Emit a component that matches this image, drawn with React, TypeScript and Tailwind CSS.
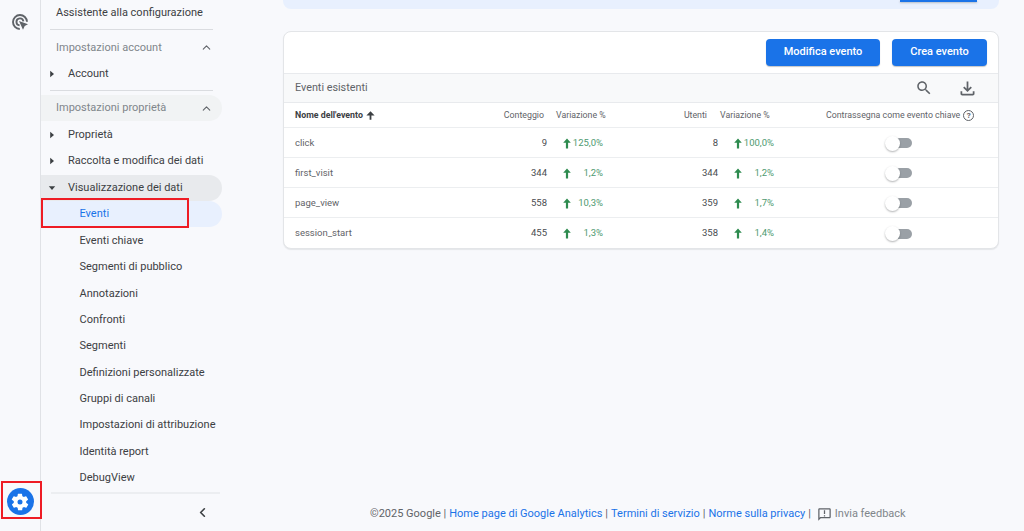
import { ChevronUp, ChevronLeft } from "lucide-react";

const subItems = [
  "Eventi chiave",
  "Segmenti di pubblico",
  "Annotazioni",
  "Confronti",
  "Segmenti",
  "Definizioni personalizzate",
  "Gruppi di canali",
  "Impostazioni di attribuzione",
  "Identità report",
  "DebugView",
];

const rows = [
  { name: "click", count: "9", countVar: "125,0%", users: "8", usersVar: "100,0%" },
  { name: "first_visit", count: "344", countVar: "1,2%", users: "344", usersVar: "1,2%" },
  { name: "page_view", count: "558", countVar: "10,3%", users: "359", usersVar: "1,7%" },
  { name: "session_start", count: "455", countVar: "1,3%", users: "358", usersVar: "1,4%" },
];

const Caret = ({ down }: { down?: boolean }) => (
  <svg width="8" height="8" viewBox="0 0 8 8" className="absolute left-[7px] top-1/2 -translate-y-1/2 fill-[#3c4043]">
    {down ? <path d="M0.8 2.2h6.4L4 6z" /> : <path d="M2.2 0.8v6.4L6 4z" />}
  </svg>
);

const TreeRow = ({ label, open, pill }: { label: string; open?: boolean; pill?: boolean }) => (
  <div className={`relative flex h-[26.4px] w-[181px] items-center rounded-r-full pl-[27px] text-[11px] text-[#3c4043] ${pill ? "bg-[#e8eaed]" : ""}`}>
    <Caret down={open} />
    {label}
  </div>
);

const GaLogo = () => (
  <svg width="18" height="18" viewBox="0 0 18 18" fill="none" stroke="#5f6368" strokeWidth="1.9">
    <path d="M8.8 16A7 7 0 1 1 16 8.8" />
    <path d="M8.6 12.4A3.5 3.5 0 1 1 12.4 8.4" />
    <path d="M8 8l9 3.2-3.3 1.7L12 16.8z" fill="#5f6368" stroke="none" />
  </svg>
);

const Gear = () => (
  <svg width="20" height="20" viewBox="0 0 24 24" fill="#fff">
    <path d="M19.4 13a7.6 7.6 0 0 0 0-2l2.1-1.6a.5.5 0 0 0 .1-.6l-2-3.5a.5.5 0 0 0-.6-.2l-2.5 1a7.3 7.3 0 0 0-1.7-1l-.4-2.7a.5.5 0 0 0-.5-.4h-4a.5.5 0 0 0-.5.4l-.4 2.7a7.3 7.3 0 0 0-1.7 1l-2.5-1a.5.5 0 0 0-.6.2l-2 3.5a.5.5 0 0 0 .1.6L4.6 11a7.6 7.6 0 0 0 0 2l-2.1 1.6a.5.5 0 0 0-.1.6l2 3.5c.1.2.4.3.6.2l2.5-1c.5.4 1.1.7 1.7 1l.4 2.7c0 .2.2.4.5.4h4c.3 0 .5-.2.5-.4l.4-2.7c.6-.3 1.2-.6 1.7-1l2.5 1c.2.1.5 0 .6-.2l2-3.5a.5.5 0 0 0-.1-.6zM12 15a3 3 0 1 1 0-6 3 3 0 0 1 0 6z" />
  </svg>
);

const SearchIcon = () => (
  <svg width="18" height="18" viewBox="0 0 24 24" className="fill-[#5f6368]">
    <path d="M15.5 14h-.79l-.28-.27C15.41 12.59 16 11.11 16 9.5 16 5.91 13.09 3 9.5 3S3 5.91 3 9.5 5.91 16 9.5 16c1.61 0 3.09-.59 4.23-1.57l.27.28v.79l5 4.99L20.49 19l-4.99-5zm-6 0C7.01 14 5 11.99 5 9.5S7.01 5 9.5 5 14 7.01 14 9.5 11.99 14 9.5 14z" />
  </svg>
);

const DownloadIcon = () => (
  <svg width="21" height="21" viewBox="0 0 24 24" className="fill-[#5f6368]">
    <path d="M18 15v3H6v-3H4v3c0 1.1.9 2 2 2h12c1.1 0 2-.9 2-2v-3h-2zm-1-4l-1.41-1.41L13 12.17V4h-2v8.17L8.41 9.59 7 11l5 5 5-5z" />
  </svg>
);

const FeedbackIcon = () => (
  <svg width="15" height="15" viewBox="0 0 24 24" className="fill-[#5f6368]">
    <path d="M20 2H4c-1.1 0-2 .9-2 2v18l4-4h14c1.1 0 2-.9 2-2V4c0-1.1-.9-2-2-2zm0 14H5.17L4 17.17V4h16v12zM11 5h2v6h-2zm0 8h2v2h-2z" />
  </svg>
);

const Toggle = () => (
  <div className="relative h-[10px] w-[26px] rounded-full bg-[#9aa0a6]">
    <div className="absolute left-[-1px] top-[-2.5px] h-[15px] w-[15px] rounded-full bg-white shadow-[0_1px_2px_rgba(60,64,67,0.4)]" />
  </div>
);

const Delta = ({ value }: { value: string }) => (
  <div className="flex w-[40px] items-center text-[9.5px] text-[#4e9a70]">
    <svg width="8" height="11" viewBox="0 0 8 11" className="fill-[#2e8b4f]">
      <path d="M4 0.5L7.8 4.8H5.1V10.5H2.9V4.8H0.2z" />
    </svg>
    <span className="ml-auto">{value}</span>
  </div>
);

export default function App() {
  return (
    <div className="flex h-[531px] w-[1024px] overflow-hidden bg-[#f8f9fc] font-['Roboto',sans-serif]">
      {/* rail */}
      <div className="relative flex w-[41px] shrink-0 flex-col items-center justify-between border-r border-[#e0e2e6] pb-[16px] pt-[13px]">
        <GaLogo />
        <div className="flex h-[27px] w-[27px] items-center justify-center rounded-full bg-[#1a73e8]">
          <Gear />
        </div>
        <div className="absolute bottom-[12px] left-[1px] h-[38px] w-[41px] border-2 border-[#ee1c25]" />
      </div>

      {/* nav */}
      <div className="relative flex w-[181px] shrink-0 flex-col">
        <div className="flex h-[26px] items-center pl-[15px] pt-[1px] text-[11px] text-[#3c4043]">Assistente alla configurazione</div>
        <div className="ml-[9px] mt-[3px] w-[163px] border-t border-[#dadce0]" />
        <div className="mt-[4px] flex h-[26px] items-center justify-between pl-[15px] pr-[9px] pt-[2px] text-[11px] text-[#80868b]">
          Impostazioni account
          <ChevronUp size={13} strokeWidth={2} className="text-[#5f6368]" />
        </div>
        <div className="pt-[1px]">
          <TreeRow label="Account" />
        </div>
        <div className="ml-[9px] mt-[3px] w-[163px] border-t border-[#dadce0]" />
        <div className="mt-[4px] flex h-[26px] items-center justify-between rounded-r-full bg-[#f1f3f4] pl-[15px] pr-[9px] text-[11px] text-[#80868b]">
          Impostazioni proprietà
          <ChevronUp size={13} strokeWidth={2} className="text-[#5f6368]" />
        </div>
        <div className="pt-[0.6px]">
          <TreeRow label="Proprietà" />
        </div>
        <TreeRow label="Raccolta e modifica dei dati" />
        <TreeRow label="Visualizzazione dei dati" open pill />
        <div className="flex h-[26.4px] items-center rounded-r-full bg-[#e8f0fe] pl-[38.5px] text-[11px] text-[#1a73e8]">Eventi</div>
        {subItems.map((item) => (
          <div key={item} className="flex h-[26.4px] items-center pl-[38.5px] pt-[1px] text-[11px] text-[#3c4043]">
            {item}
          </div>
        ))}
        <div className="ml-[10px] mt-[1px] w-[169px] border-t-2 border-[#eceef1]" />
        <div className="flex h-[37px] items-center justify-end pr-[12px]">
          <ChevronLeft size={15} strokeWidth={2.6} className="text-[#3c4043]" />
        </div>
        <div className="absolute left-0 top-[198px] h-[30px] w-[148px] border-2 border-[#ee1c25]" />
      </div>

      {/* main */}
      <div className="flex flex-1 flex-col pl-[61px] pr-[25px]">
        <div className="flex h-[9px] justify-end rounded-b-lg bg-[#e8f0fe] pr-[22px]">
          <div className="h-[1.5px] w-[77px] bg-[#1a73e8] shadow-[0_1px_2px_rgba(60,64,67,0.3)]" />
        </div>

        <div className="mt-[22px] rounded-lg border border-[#e3e5e8] bg-white shadow-[0_1px_1px_rgba(60,64,67,0.1)]">
          <div className="flex h-[41px] items-start justify-end gap-[12px] pr-[11px] pt-[7px]">
            <button className="h-[27px] w-[114px] rounded bg-[#1a73e8] text-[11px] font-medium text-white shadow-[0_1px_1px_rgba(60,64,67,0.3)]">Modifica evento</button>
            <button className="h-[27px] w-[95px] rounded bg-[#1a73e8] text-[11px] font-medium text-white shadow-[0_1px_1px_rgba(60,64,67,0.3)]">Crea evento</button>
          </div>

          <div className="flex h-[30px] items-center justify-between border-y border-[#e8eaed] bg-[#f8f9fa] pl-[11px] pr-[20px] text-[10.8px] text-[#5f6368]">
            Eventi esistenti
            <div className="flex items-center gap-[24px]">
              <SearchIcon />
              <DownloadIcon />
            </div>
          </div>

          <div className="flex h-[25px] items-center border-b border-[#eceef0] pt-[1px] text-[8.8px] text-[#5f6368]">
            <div className="flex w-[189px] items-center gap-[3px] pl-[11px] font-bold text-[#3c4043]">
              Nome dell'evento
              <svg width="9" height="9" viewBox="0 0 9 9" className="fill-[#3c4043]">
                <path d="M4.5 0.3L8.6 4.5H5.4V8.8H3.6V4.5H0.4z" />
              </svg>
            </div>
            <div className="w-[71px] text-right">Conteggio</div>
            <div className="ml-[12px] w-[60px]">Variazione %</div>
            <div className="w-[91px] text-right">Utenti</div>
            <div className="ml-[13px] w-[106px]">Variazione %</div>
            <div className="flex items-center gap-[3px]">
              Contrassegna come evento chiave
              <span className="flex h-[11px] w-[11px] items-center justify-center rounded-full border border-[#5f6368] text-[8px] font-bold">?</span>
            </div>
          </div>

          {rows.map((row) => (
            <div key={row.name} className="flex h-[30px] items-center border-b border-[#eceef0] pt-[1px] text-[9.5px] text-[#494c50] last:border-b-0">
              <div className="w-[189px] pl-[11px] text-[#5f6368]">{row.name}</div>
              <div className="w-[74px] text-right">{row.count}</div>
              <div className="ml-[16px] w-[40px]">
                <Delta value={row.countVar} />
              </div>
              <div className="w-[115px] text-right">{row.users}</div>
              <div className="ml-[16px] w-[40px]">
                <Delta value={row.usersVar} />
              </div>
              <div className="ml-[112px]">
                <Toggle />
              </div>
            </div>
          ))}
        </div>

        <div className="mt-auto flex h-[33px] items-center gap-[3px] pl-[87px] text-[11px] text-[#5f6368]">
          <span>©2025 Google |</span>
          <span className="text-[#1a73e8]">Home page di Google Analytics</span>
          <span>|</span>
          <span className="text-[#1a73e8]">Termini di servizio</span>
          <span>|</span>
          <span className="text-[#1a73e8]">Norme sulla privacy</span>
          <span>|</span>
          <span className="ml-[3px]">
            <FeedbackIcon />
          </span>
          <span className="text-[#80868b]">Invia feedback</span>
        </div>
      </div>
    </div>
  );
}
